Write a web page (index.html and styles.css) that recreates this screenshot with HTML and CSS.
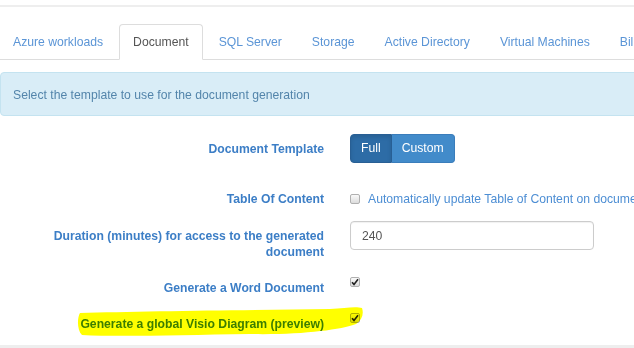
FILE: index.html
```html
<!DOCTYPE html>
<html lang="en">
<head>
    <meta charset="UTF-8">
    <meta name="viewport" content="width=device-width, initial-scale=1.0">
    <title>Document generation</title>
    <link rel="stylesheet" href="styles.css">
</head>
<body>
    <div class="page">
        <div class="top-rule"></div>

        <ul class="tabs">
            <li><a href="#">Azure workloads</a></li>
            <li class="active"><a href="#">Document</a></li>
            <li><a href="#">SQL Server</a></li>
            <li><a href="#">Storage</a></li>
            <li><a href="#">Active Directory</a></li>
            <li><a href="#">Virtual Machines</a></li>
            <li><a href="#">Billing</a></li>
        </ul>

        <div class="alert-info">Select the template to use for the document generation</div>

        <!-- Form fields for the document -->
        <div class="form">
            <div class="form-row row-template">
                <label class="control-label">Document Template</label>
                <div class="controls">
                    <div class="btn-group">
                        <button class="btn active">Full</button>
                        <button class="btn">Custom</button>
                    </div>
                </div>
            </div>

            <div class="form-row row-toc">
                <label class="control-label">Table Of Content</label>
                <div class="controls check-line">
                    <span class="check"></span>
                    <span class="check-text">Automatically update Table of Content on document opening</span>
                </div>
            </div>

            <div class="form-row row-duration">
                <label class="control-label">Duration (minutes) for access to the generated document</label>
                <div class="controls">
                    <input type="text" class="text-input" value="240">
                </div>
            </div>

            <div class="form-row row-small">
                <label class="control-label">Generate a Word Document</label>
                <div class="controls">
                    <span class="check checked">
                        <svg width="8" height="8" viewBox="0 0 8 8"><path d="M1 4.2 L3 6.4 L7 1.2" fill="none" stroke="#222" stroke-width="1.6"/></svg>
                    </span>
                </div>
            </div>

            <div class="form-row row-small">
                <label class="control-label">Generate a global Visio Diagram (preview)</label>
                <div class="controls">
                    <span class="check checked">
                        <svg width="8" height="8" viewBox="0 0 8 8"><path d="M1 4.2 L3 6.4 L7 1.2" fill="none" stroke="#222" stroke-width="1.6"/></svg>
                    </span>
                </div>
            </div>
        </div>

        <div class="page-end"></div>

        <!-- marker highlight drawn over the last row -->
        <svg class="marker" width="634" height="348" viewBox="0 0 634 348">
            <path d="M80 313 C 140 311, 250 310, 330 309 C 345 308, 356 306, 362 308 C 364 314, 362 320, 356 324 C 340 330, 300 335, 250 334 C 180 335, 120 337, 82 335 C 77 330, 77 318, 80 313 Z" fill="#ffff00"/>
        </svg>
    </div>
</body>
</html>
```

FILE: styles.css
```css
body {
    margin: 0;
    font-family: "Liberation Sans", Arial, sans-serif;
    font-size: 12.2px;
    line-height: 16px;
    background-color: white;
    overflow: hidden;
}
.page {
    position: relative;
    width: 634px;
    height: 348px;
    overflow: hidden;
}
.top-rule {
    height: 5px;
    border-bottom: 2px solid #eeeeee;
}
.tabs {
    display: flex;
    list-style: none;
    margin: 17px 0 0 0;
    padding: 0;
    border-bottom: 1px solid #dddddd;
    white-space: nowrap;
}
.tabs li {
    flex-shrink: 0;
    margin-right: 2px;
    margin-bottom: -1px;
}
.tabs li:first-child {
    margin-left: -1px;
}
.tabs a {
    display: block;
    padding: 9px 13px;
    border: 1px solid transparent;
    border-radius: 4px 4px 0 0;
    color: #5b95d6;
    text-decoration: none;
}
.tabs .active a {
    color: #555555;
    background-color: white;
    border-color: #dddddd;
    border-bottom-color: transparent;
}
.alert-info {
    margin: 12px -10px 0 0;
    padding: 14px 12px 12px;
    background-color: #d9edf7;
    border: 1px solid #c4e3f0;
    border-radius: 4px;
    color: #5385ab;
}
.form {
    margin-top: 18px;
}
.form-row {
    display: flex;
    align-items: flex-start;
}
.control-label {
    box-sizing: border-box;
    flex-shrink: 0;
    width: 324px;
    padding-left: 40px;
    padding-right: 0;
    text-align: right;
    font-weight: bold;
    color: #3c7ec6;
}
.controls {
    margin-left: 26px;
}
.row-template .control-label {
    padding-top: 7px;
}
.row-toc {
    margin-top: 28px;
}
.row-duration {
    margin-top: 14px;
}
.row-duration .control-label {
    padding-top: 7px;
}
.row-small {
    margin-top: 17px;
}
.row-small .control-label {
    padding-top: 3px;
}
.btn-group {
    display: flex;
}
.btn {
    font-family: inherit;
    font-size: 12.2px;
    line-height: 15px;
    padding: 6px 10px;
    color: white;
    background-color: #428bca;
    border: 1px solid #3a7dbb;
    cursor: pointer;
}
.btn:first-child {
    border-radius: 4px 0 0 4px;
}
.btn:last-child {
    border-radius: 0 4px 4px 0;
    border-left: none;
}
.btn.active {
    background-color: #2d6ca6;
    border-color: #285f94;
    box-shadow: inset 0 2px 4px rgba(0, 0, 0, 0.12);
}
.check-line {
    display: flex;
    align-items: center;
    white-space: nowrap;
}
.check {
    box-sizing: border-box;
    display: flex;
    flex-shrink: 0;
    align-items: center;
    justify-content: center;
    width: 10px;
    height: 10px;
    border: 1px solid #b0b0b0;
    border-radius: 2px;
    background: linear-gradient(#fafafa, #dcdcdc);
}
.check-text {
    margin-left: 8px;
    color: #4d8ed4;
}
.text-input {
    box-sizing: border-box;
    width: 244px;
    height: 29px;
    padding: 0 11px;
    border: 1px solid #cccccc;
    border-radius: 4px;
    font-family: inherit;
    font-size: 12.2px;
    color: #555555;
    box-shadow: inset 0 1px 1px rgba(0, 0, 0, 0.06);
}
.page-end {
    position: absolute;
    left: 0;
    right: 0;
    bottom: 0;
    height: 3px;
    background-color: #eeeeee;
}
.marker {
    position: absolute;
    left: 0;
    top: 0;
    mix-blend-mode: multiply;
    pointer-events: none;
}
```
